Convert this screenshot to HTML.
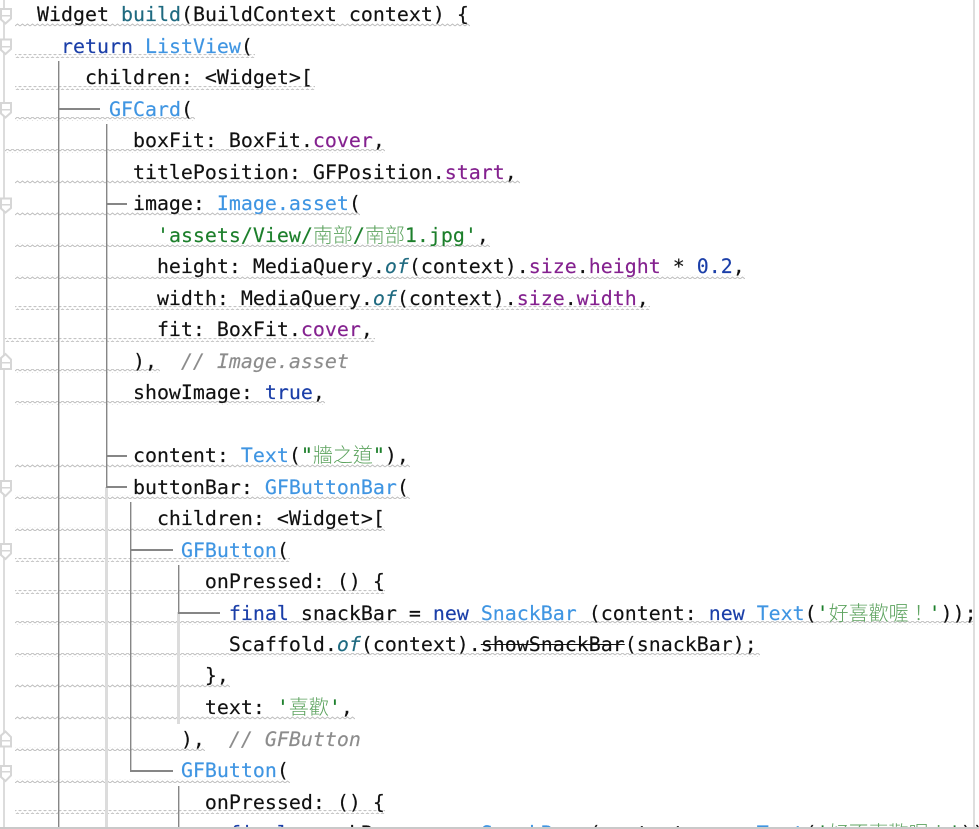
<!DOCTYPE html>
<html><head><meta charset="utf-8"><style>
html,body{margin:0;padding:0;background:#fff;width:979px;height:829px;overflow:hidden}
#v{position:absolute;left:0;top:0;width:979px;height:827px;overflow:hidden;background:#fff}
svg{position:absolute;left:0;top:0}
pre{position:absolute;left:37px;margin:0;height:31px;font:19.93px/31px "DejaVu Sans Mono","Liberation Mono","Noto Sans CJK TC",monospace;color:#111;-webkit-text-stroke:.15px currentColor}
.k{color:#1a3ea8}.c{color:#3f95e2}.p{color:#84218f}.s{color:#1c7f2b}.g{color:#8c8c8c;font-style:italic}.f{color:#1f6a80}.i{color:#1f6a80;font-style:italic}
.z{font-family:"Noto Sans CJK TC",sans-serif;font-size:20px;line-height:0;font-weight:300;color:#5da35f;-webkit-text-stroke:0}
.t{text-decoration:line-through}
#b{position:absolute;left:0;top:827px;width:979px;height:2px;background:#c9c9c9}
</style></head><body><div id="v">
<svg width="979" height="829" viewBox="0 0 979 829">
<defs><pattern id="w" x="0" y="0" width="5" height="4" patternUnits="userSpaceOnUse"><path d="M0 3L2.5 1L5 3" fill="none" stroke="#bdbdbd" stroke-width="1"/></pattern></defs>
<g fill="url(#w)">
<rect x="15" y="24" width="455" height="4" transform="translate(0,-1)"/>
<rect x="15" y="54" width="240" height="4"/>
<rect x="15" y="86" width="300" height="4"/>
<rect x="15" y="117" width="180" height="4"/>
<rect x="5" y="149" width="380" height="4"/>
<rect x="15" y="180" width="505" height="4"/>
<rect x="15" y="212" width="345" height="4"/>
<rect x="15" y="243" width="475" height="4"/>
<rect x="15" y="275" width="730" height="4"/>
<rect x="15" y="306" width="635" height="4"/>
<rect x="5" y="338" width="370" height="4"/>
<rect x="15" y="369" width="145" height="4"/>
<rect x="15" y="401" width="310" height="4"/>
<rect x="15" y="464" width="395" height="4"/>
<rect x="15" y="495" width="395" height="4"/>
<rect x="15" y="527" width="370" height="4"/>
<rect x="15" y="558" width="275" height="4"/>
<rect x="15" y="590" width="370" height="4"/>
<rect x="15" y="621" width="960" height="4"/>
<rect x="15" y="653" width="745" height="4"/>
<rect x="15" y="684" width="215" height="4"/>
<rect x="15" y="716" width="340" height="4"/>
<rect x="15" y="747" width="190" height="4"/>
<rect x="15" y="779" width="275" height="4"/>
<rect x="15" y="810" width="370" height="4"/>
</g>
<rect x="3" y="0" width="2" height="829" fill="#dcdcdc"/>
<rect x="973" y="0" width="2" height="829" fill="#dedede"/>
<g fill="#dcdcdc">
<rect x="105" y="487" width="3" height="340"/>
<rect x="177" y="612" width="3" height="112"/>
</g>
<g fill="#868686">
<rect x="58" y="61" width="1.4" height="766"/>
<rect x="58" y="108" width="42" height="2"/>
<rect x="106" y="124" width="1.4" height="363"/>
<rect x="106" y="203" width="21" height="2"/>
<rect x="106" y="455" width="21" height="2"/>
<rect x="106" y="486" width="21" height="2"/>
<rect x="130" y="502" width="1.4" height="269"/>
<rect x="130" y="549" width="43" height="2"/>
<rect x="130" y="770" width="43" height="2"/>
<rect x="178" y="565" width="1.4" height="48"/>
<rect x="178" y="612" width="42" height="2"/>
<rect x="178" y="786" width="1.4" height="41"/>
</g>
<g fill="#fff" stroke="#d6d6d6" stroke-width="2">
<path d="M1 9H11V18.500L5.500 23.500L1 19.500Z"/>
<path d="M1 39.500H11V49L5.500 54L1 50Z"/>
<path d="M1 103H11V112.500L5.500 117.500L1 113.500Z"/>
<path d="M1 198.500H11V208L5.500 212.500L1 208.500Z"/>
<path d="M1 481H11V490.500L5.500 496L1 492Z"/>
<path d="M1 544H11V553.500L5.500 559L1 555Z"/>
<path d="M1 766H11V775.500L5.500 781L1 777Z"/>
<path d="M1 369H11V359.500L5.500 354L1 358Z"/>
<path d="M1 746.500H11V737L5.500 731.500L1 735.500Z"/>
</g>
<g fill="#d6d6d6">
<rect x="2" y="15" width="8" height="1.500"/>
<rect x="2" y="46" width="8" height="1.500"/>
<rect x="2" y="109" width="8" height="1.500"/>
<rect x="2" y="204" width="8" height="1.500"/>
<rect x="2" y="487" width="8" height="1.500"/>
<rect x="2" y="550" width="8" height="1.500"/>
<rect x="2" y="771" width="8" height="1.500"/>
<rect x="2" y="362" width="8" height="1.500"/>
<rect x="2" y="740" width="8" height="1.500"/>
</g>
</svg>
<pre style="top:-1px">Widget <span class="f">build</span>(BuildContext context) {</pre>
<pre style="top:31px">  <span class="k">return</span> <span class="c">ListView</span>(</pre>
<pre style="top:62px">    children: &lt;Widget&gt;[</pre>
<pre style="top:94px">      <span class="c">GFCard</span>(</pre>
<pre style="top:125px">        boxFit: BoxFit.<span class="p">cover</span>,</pre>
<pre style="top:157px">        titlePosition: GFPosition.<span class="p">start</span>,</pre>
<pre style="top:188px">        image: <span class="c">Image.asset</span>(</pre>
<pre style="top:220px">          <span class="s">'assets/View/<span class="z">南部</span>/<span class="z">南部</span>1.jpg'</span>,</pre>
<pre style="top:251px">          height: MediaQuery.<span class="i">of</span>(context).<span class="p">size</span>.<span class="p">height</span> * <span class="k">0.2</span>,</pre>
<pre style="top:283px">          width: MediaQuery.<span class="i">of</span>(context).<span class="p">size</span>.<span class="p">width</span>,</pre>
<pre style="top:314px">          fit: BoxFit.<span class="p">cover</span>,</pre>
<pre style="top:346px">        ),  <span class="g">// Image.asset</span></pre>
<pre style="top:377px">        showImage: <span class="k">true</span>,</pre>
<pre style="top:440px">        content: <span class="c">Text</span>(<span class="s">"<span class="z">牆之道</span>"</span>),</pre>
<pre style="top:472px">        buttonBar: <span class="c">GFButtonBar</span>(</pre>
<pre style="top:503px">          children: &lt;Widget&gt;[</pre>
<pre style="top:535px">            <span class="c">GFButton</span>(</pre>
<pre style="top:566px">              onPressed: () {</pre>
<pre style="top:598px">                <span class="k">final</span> snackBar = <span class="k">new</span> <span class="c">SnackBar</span> (content: <span class="k">new</span> <span class="c">Text</span>(<span class="s">'<span class="z">好喜歡喔！</span>'</span>));</pre>
<pre style="top:629px">                Scaffold.<span class="i">of</span>(context).<span class="t">showSnackBar</span>(snackBar);</pre>
<pre style="top:660px">              },</pre>
<pre style="top:692px">              text: <span class="s">'<span class="z">喜歡</span>'</span>,</pre>
<pre style="top:724px">            ),  <span class="g">// GFButton</span></pre>
<pre style="top:755px">            <span class="c">GFButton</span>(</pre>
<pre style="top:787px">              onPressed: () {</pre>
<pre style="top:818px">                <span class="k">final</span> snackBar = <span class="k">new</span> <span class="c">SnackBar</span> (content: <span class="k">new</span> <span class="c">Text</span>(<span class="s">'<span class="z">好不喜歡喔！</span>'</span>));</pre>
</div><div id="b"></div></body></html>
